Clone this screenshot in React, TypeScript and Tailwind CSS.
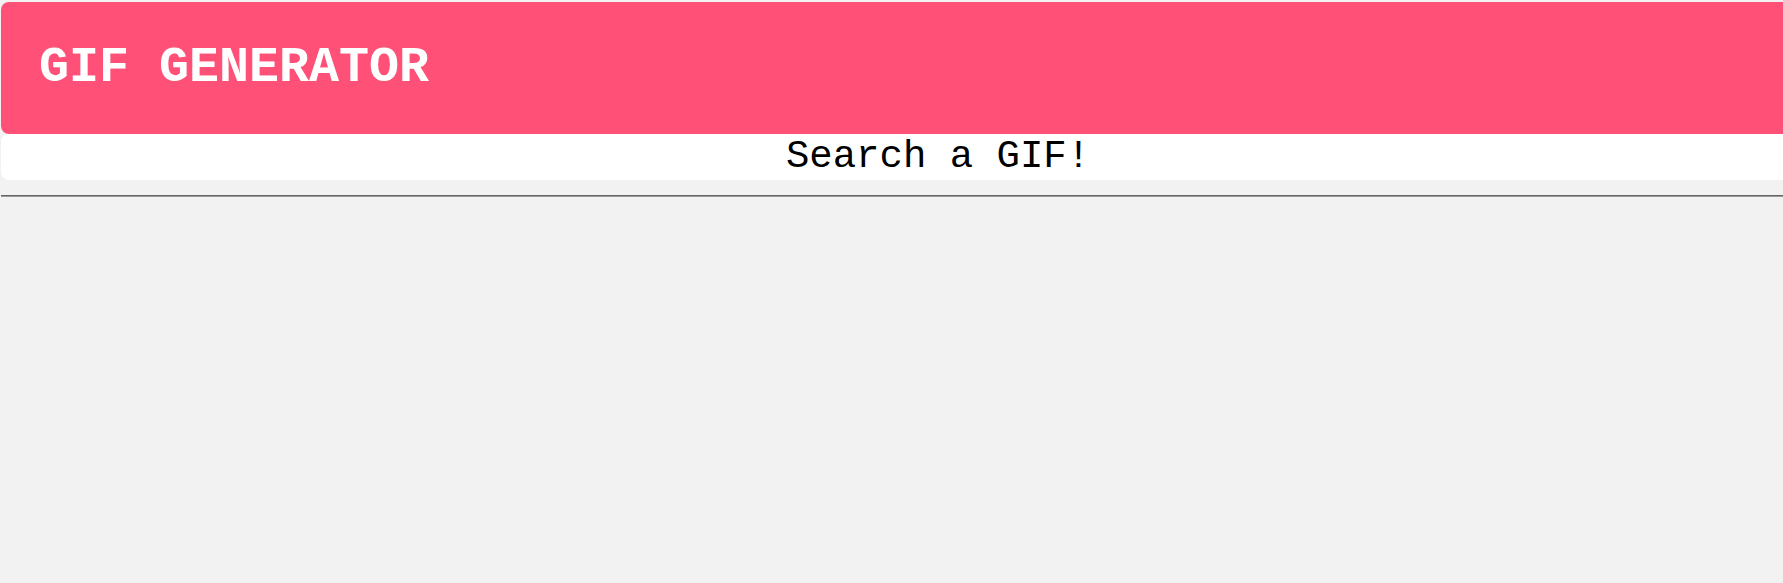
export default function App() {
  return (
    <div className="w-[1783px] h-[583px] overflow-hidden bg-[#f2f2f2] font-['Liberation_Mono','Courier_New',monospace]">
      <div className="w-[1874px] ml-px pt-[2px]">
        <header className="h-[132px] rounded-lg bg-[#ff5077] flex items-center pl-[38px]">
          <h1 className="text-[50px] leading-none font-bold text-white">GIF GENERATOR</h1>
        </header>
        <div className="h-[46px] rounded-lg bg-white flex items-center justify-center">
          <span className="text-[39px] leading-none text-black">Search a GIF!</span>
        </div>
        <div className="mt-[15px] border-t border-[#666] border-b border-b-[#999]" />
      </div>
    </div>
  );
}
